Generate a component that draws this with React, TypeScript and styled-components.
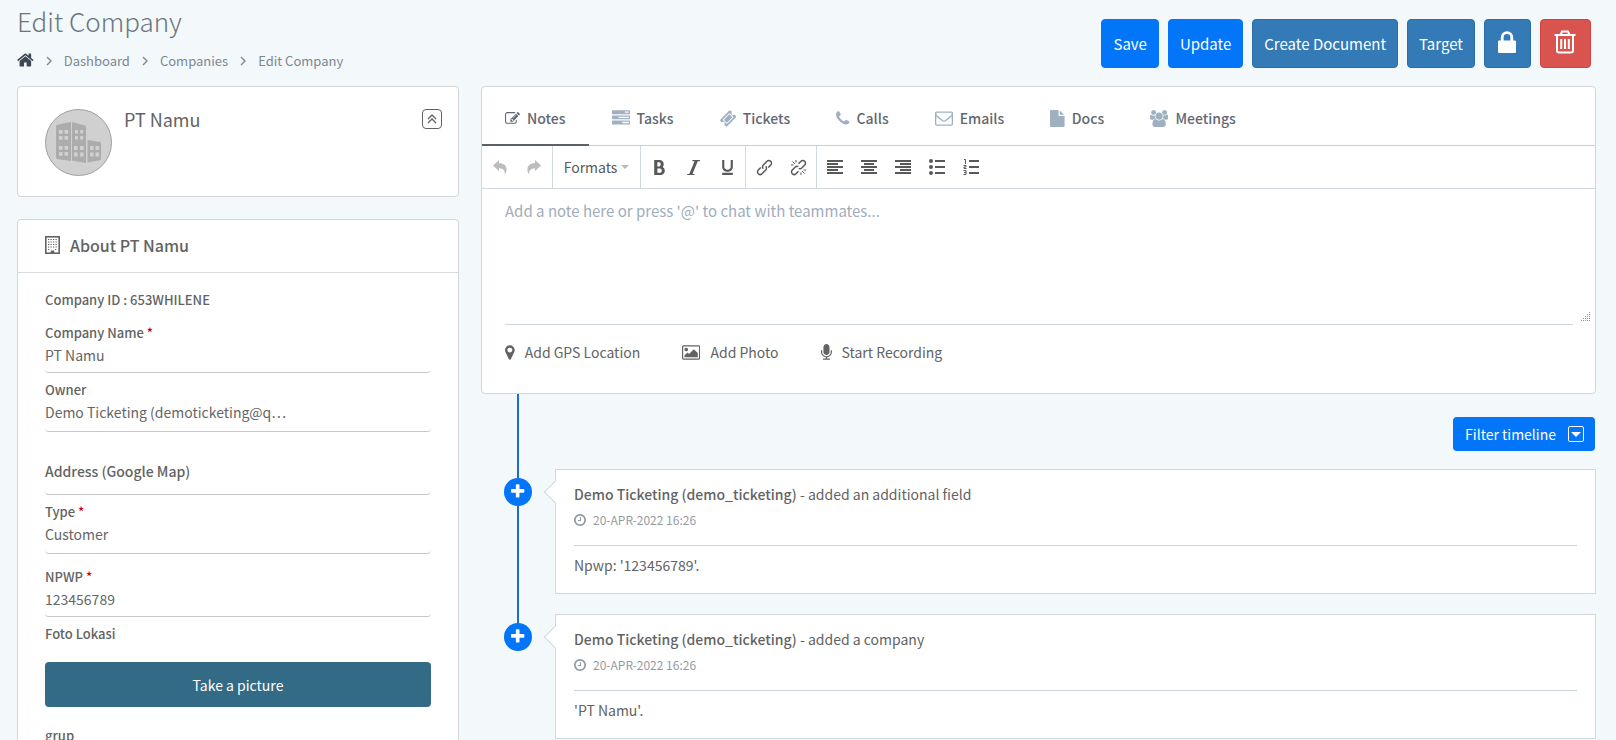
import React from "react";
import styled, { createGlobalStyle } from "styled-components";
import { ImBold, ImItalic, ImUnderline } from "react-icons/im";

const GlobalStyle = createGlobalStyle`
  *, *::before, *::after { box-sizing: border-box; }
  html { scrollbar-width: none; }
  body {
    margin: 0;
    background: #f3f8fb;
    color: #636363;
    font-family: "Noto Sans CJK JP", "Noto Sans", sans-serif;
    font-size: 14px;
    line-height: 20px;
  }
  button, input, select, textarea { font: inherit; color: inherit; }
  a { color: inherit; text-decoration: none; }
`;

/* ---------- icons ---------- */

const paths = {
  home: "M1472 992v480q0 26-19 45t-45 19h-384v-384h-256v384h-384q-26 0-45-19t-19-45v-480q0-1 .5-3t.5-3l575-474 575 474q1 2 1 6zm223-69l-62 74q-8 9-21 11h-3q-13 0-21-7l-692-577-692 577q-12 8-24 7-13-2-21-11l-62-74q-8-10-7-23.5t11-21.5l719-599q32-26 76-26t76 26l244 204v-195q0-14 9-23t23-9h192q14 0 23 9t9 23v408l219 182q10 8 11 21.5t-7 23.5z",
  edit: "M888 1184l116-116-152-152-116 116v56h96v96h56zm440-720q-16-16-33 1l-350 350q-17 17-1 33t33-1l350-350q17-17 1-33zm80 594v190q0 119-84.5 203.5t-203.5 84.5h-832q-119 0-203.5-84.5t-84.5-203.5v-832q0-119 84.5-203.5t203.5-84.5h832q63 0 117 25 15 7 18 23 3 17-9 29l-49 49q-14 14-32 8-23-6-45-6h-832q-66 0-113 47t-47 113v832q0 66 47 113t113 47h832q66 0 113-47t47-113v-126q0-13 9-22l64-64q15-15 35-7t20 29zm-96-738l288 288-672 672h-288v-288zm444 132l-92 92-288-288 92-92q28-28 68-28t68 28l152 152q28 28 28 68t-28 68z",
  tasks: "M1024 1408h640v-128h-640v128zm-384-512h1024v-128h-1024v128zm640-512h384v-128h-384v128zm512 832v256q0 26-19 45t-45 19h-1664q-26 0-45-19t-19-45v-256q0-26 19-45t45-19h1664q26 0 45 19t19 45zm0-512v256q0 26-19 45t-45 19h-1664q-26 0-45-19t-19-45v-256q0-26 19-45t45-19h1664q26 0 45 19t19 45zm0-512v256q0 26-19 45t-45 19h-1664q-26 0-45-19t-19-45v-256q0-26 19-45t45-19h1664q26 0 45 19t19 45z",
  ticket: "M1024 452l316 316-572 572-316-316zm-211 979l618-618q19-19 19-45t-19-45l-362-362q-18-18-45-18t-45 18l-618 618q-19 19-19 45t19 45l362 362q18 18 45 18t45-18zm889-637l-907 908q-37 37-90.5 37t-90.5-37l-126-126q56-56 56-136t-56-136-136-56-136 56l-125-126q-37-37-37-90.5t37-90.5l907-906q37-37 90.5-37t90.5 37l125 125q-56 56-56 136t56 136 136 56 136-56l126 125q37 37 37 90.5t-37 90.5z",
  phone: "M1600 1240q0 27-10 70.5t-21 68.5q-21 50-122 106-94 51-186 51-27 0-53-3.5t-57.5-12.5-47-14.5-55.5-20.5-49-18q-98-35-175-83-127-79-264-216t-216-264q-48-77-83-175-3-9-18-49t-20.5-55.5-14.5-47-12.5-57.5-3.5-53q0-92 51-186 56-101 106-122 25-11 68.5-21t70.5-10q14 0 21 3 18 6 53 76 11 19 30 54t35 63.5 31 53.5q3 4 17.5 25t21.5 35.5 7 28.5q0 20-28.5 50t-62 55-62 53-28.5 46q0 9 5 22.5t8.5 20.5 14 24 11.5 19q76 137 174 235t235 174q2 1 19 11.5t24 14 20.5 8.5 22.5 5q18 0 46-28.5t53-62 55-62 50-28.5q14 0 28.5 7t35.5 21.5 25 17.5q25 15 53.5 31t63.5 35 54 30q70 35 76 53 3 7 3 21z",
  mail: "M1664 1504v-768q-32 36-69 66-268 206-426 338-51 43-83 67t-86.5 48.5-102.5 24.5h-2q-48 0-102.5-24.5t-86.5-48.5-83-67q-158-132-426-338-37-30-69-66v768q0 13 9.5 22.5t22.5 9.5h1472q13 0 22.5-9.5t9.5-22.5zm0-1051v-24.5l-.5-13-3-12.5-5.5-9-9-7.5-14-2.5h-1472q-13 0-22.5 9.5t-9.5 22.5q0 168 147 284 193 152 401 317 6 5 35 29.5t46 37.5 44.5 31.5 50.5 27.5 43 9h2q20 0 43-9t50.5-27.5 44.5-31.5 46-37.5 35-29.5q208-165 401-317 54-43 100.5-115.5t46.5-131.5zm128-37v1088q0 66-47 113t-113 47h-1472q-66 0-113-47t-47-113v-1088q0-66 47-113t113-47h1472q66 0 113 47t47 113z",
  file: "M1152 512v-472q22 14 36 28l408 408q14 14 28 36h-472zm-128 32q0 40 28 68t68 28h544v1056q0 40-28 68t-68 28h-1344q-40 0-68-28t-28-68v-1600q0-40 28-68t68-28h800v544z",
  users: "M529 896q-162 5-265 128h-134q-82 0-138-40.5t-56-118.5q0-353 124-353 6 0 43.5 21t97.5 42.5 119 21.5q67 0 133-23-5 37-5 66 0 159 93 290zm1071 637q0 120-73 189.5t-194 69.5h-874q-121 0-194-69.5t-73-189.5q0-53 3.5-103.5t14-109 26.5-108.5 43-97.5 62-81 85.500-53.500 111.500-20q10 0 43 21.500t73 48 107 48 135 21.500 135-21.500 107-48 73-48 43-21.500q61 0 111.500 20t85.500 53.500 62 81 43 97.500 26.500 108.500 14 109 3.500 103.500zm-1024-1277q0 106-75 181t-181 75-181-75-75-181 75-181 181-75 181 75 75 181zm704 384q0 159-112.500 271.500t-271.500 112.500-271.500-112.500-112.500-271.500 112.500-271.500 271.500-112.500 271.500 112.500 112.500 271.500zm576 225q0 78-56 118.500t-138 40.500h-134q-103-123-265-128 93-131 93-290 0-29-5-66 66 23 133 23 59 0 119-21.500t97.500-42.500 43.500-21q124 0 124 353zm-128-609q0 106-75 181t-181 75-181-75-75-181 75-181 181-75 181 75 75 181z",
  marker: "M1152 640q0-106-75-181t-181-75-181 75-75 181 75 181 181 75 181-75 75-181zm256 0q0 109-33 179l-364 774q-16 33-47.5 52t-67.5 19-67.5-19-46.5-52l-365-774q-33-70-33-179 0-212 150-362t362-150 362 150 150 362z",
  photo: "M576 576q0 80-56 136t-136 56-136-56-56-136 56-136 136-56 136 56 56 136zm1024 384v448h-1408v-192l320-320 160 160 512-512zm96-704h-1600q-13 0-22.5 9.5t-9.5 22.5v1216q0 13 9.5 22.5t22.5 9.5h1600q13 0 22.5-9.5t9.5-22.5v-1216q0-13-9.5-22.5t-22.5-9.5zm160 32v1216q0 66-47 113t-113 47h-1600q-66 0-113-47t-47-113v-1216q0-66 47-113t113-47h1600q66 0 113 47t47 113z",
  mic: "M1472 704v128q0 221-147.5 384.5t-364.5 187.5v132h256q26 0 45 19t19 45-19 45-45 19h-640q-26 0-45-19t-19-45 19-45 45-19h256v-132q-217-24-364.5-187.5t-147.5-384.5v-128q0-26 19-45t45-19 45 19 19 45v128q0 185 131.5 316.5t316.5 131.5 316.5-131.5 131.5-316.5v-128q0-26 19-45t45-19 45 19 19 45zm-256-384v512q0 132-94 226t-226 94-226-94-94-226v-512q0-132 94-226t226-94 226 94 94 226z",
  clock: "M1024 544v448q0 14-9 23t-23 9h-320q-14 0-23-9t-9-23v-64q0-14 9-23t23-9h224v-352q0-14 9-23t23-9h64q14 0 23 9t9 23zm416 352q0-148-73-273t-198-198-273-73-273 73-198 198-73 273 73 273 198 198 273 73 273-73 198-198 73-273zm224 0q0 209-103 385.5t-279.5 279.5-385.5 103-385.5-103-279.5-279.5-103-385.5 103-385.5 279.5-279.5 385.5-103 385.5 103 279.5 279.5 103 385.5z",
  plus: "M1600 736v192q0 40-28 68t-68 28h-416v416q0 40-28 68t-68 28h-192q-40 0-68-28t-28-68v-416h-416q-40 0-68-28t-28-68v-192q0-40 28-68t68-28h416v-416q0-40 28-68t68-28h192q40 0 68 28t28 68v416h416q40 0 68 28t28 68z",
};

type IconName = keyof typeof paths;

const boxes: Record<IconName, string> = {
  home: "64 0 1664 1792",
  edit: "0 0 1792 1792",
  tasks: "0 0 1792 1792",
  ticket: "40 0 1712 1792",
  phone: "192 0 1408 1792",
  mail: "0 0 1792 1792",
  file: "128 0 1536 1792",
  users: "-64 0 1920 1792",
  marker: "384 0 1024 1792",
  photo: "-64 0 1920 1792",
  mic: "320 0 1152 1792",
  clock: "128 0 1536 1792",
  plus: "192 0 1408 1792",
};

function Icon({ name, size }: { name: IconName; size: number }) {
  return (
    <svg height={size} viewBox={boxes[name]} fill="currentColor" aria-hidden="true">
      <path d={paths[name]} />
    </svg>
  );
}

const Chevron = () => (
  <svg width="6" height="10" viewBox="0 0 6 10" fill="none" stroke="currentColor" strokeWidth="1.4" aria-hidden="true">
    <path d="M1 1l4 4-4 4" />
  </svg>
);

const LockIcon = () => (
  <svg width="18" height="22" viewBox="0 0 18 22" aria-hidden="true">
    <path d="M4.200 11V6.500a4.800 4.800 0 0 1 9.600 0V11" fill="none" stroke="currentColor" strokeWidth="2.800" />
    <rect x="0" y="9.500" width="18" height="12.500" rx="1" fill="currentColor" />
  </svg>
);

const TrashIcon = () => (
  <svg width="22" height="24" viewBox="0 0 22 24" fill="none" stroke="currentColor" strokeWidth="2" aria-hidden="true">
    <path d="M0.500 5h21M6.500 5l1.500-3.500h6L15.500 5M3 5v15.500q0 2 2 2h12q2 0 2-2V5M7.200 9v10M11 9v10M14.800 9v10" />
  </svg>
);

const BuildingIcon = () => (
  <svg width="15" height="18" viewBox="0 0 15 18" fill="none" stroke="currentColor" aria-hidden="true">
    <rect x="0.800" y="0.800" width="13.400" height="16.400" strokeWidth="1.600" />
    <path d="M3 3.500h9M3 6h9M3 8.500h9M3 11h9M3 13.500h2M10 13.500h2" strokeWidth="1.200" strokeDasharray="1.300 1.200" />
    <path d="M7.500 14.500v2.500" strokeWidth="3.500" />
  </svg>
);

const AvatarPicture = () => (
  <svg viewBox="0 0 67 67" width="67" height="67" aria-hidden="true">
    <circle cx="33.500" cy="33.500" r="33" fill="#d0d0d0" stroke="#9aa0a6" />
    <g fill="#acacac">
      <path d="M11 17q0-1 1-1.300L26 13v39L12 50q-1-.2-1-1.200z" />
      <path d="M27 13l13 3.500q1 .3 1 1.300V54L27 51.500z" />
      <path d="M42.500 31l12.500 2q1 .2 1 1.200V50q0 1-1 1.200L42.500 53.500z" />
    </g>
    <g fill="#d0d0d0">
      {[21, 27, 37, 43].map((y) =>
        [14, 19.5].map((x) => <rect key={`${x}-${y}`} x={x} y={y} width="3.600" height="3.800" rx="0.500" />)
      )}
      {[21, 27].map((y) =>
        [30, 35.2].map((x) => <rect key={`${x}-${y}`} x={x} y={y} width="3" height="3.400" rx="0.500" />)
      )}
      {[37, 43.5].map((y) =>
        [29, 35, 45, 50.5].map((x) => <rect key={`${x}-${y}`} x={x} y={y} width="3.600" height="4" rx="0.500" />)
      )}
    </g>
  </svg>
);

const CollapseIcon = () => (
  <svg width="10" height="10" viewBox="0 0 10 10" fill="none" stroke="currentColor" strokeWidth="1.300" aria-hidden="true">
    <path d="M1 5l4-4 4 4M1 9l4-4 4 4" />
  </svg>
);

const UndoIcon = ({ flip = false }: { flip?: boolean }) => (
  <svg width="14" height="15" viewBox="0 0 14 15" fill="currentColor" aria-hidden="true">
    <path
      transform={flip ? "matrix(-1 0 0 1 14 0)" : undefined}
      d="M0 5.500L6 0v3.300c5 0 7.600 2.700 7.600 6.200 0 2-.7 3.600-2 5.200.7-3.400-.6-6.500-5.600-6.500V11z"
    />
  </svg>
);

const LinkIcon = () => (
  <svg width="17" height="17" viewBox="0 0 17 17" fill="none" stroke="currentColor" strokeWidth="1.500" aria-hidden="true">
    <path d="M7.300 9.700a2.600 2.600 0 0 1 0-3.700L11 2.300a2.600 2.600 0 0 1 3.700 3.700l-2.500 2.500" />
    <path d="M9.700 7.300a2.600 2.600 0 0 1 0 3.700L6 14.700A2.600 2.600 0 0 1 2.300 11l2.500-2.500" />
  </svg>
);

const UnlinkIcon = () => (
  <svg width="17" height="17" viewBox="0 0 17 17" fill="none" stroke="currentColor" strokeWidth="1.500" aria-hidden="true">
    <path d="M8.500 4.800L11 2.300a2.600 2.600 0 0 1 3.700 3.700l-3 3a2.600 2.600 0 0 1-3 .4" />
    <path d="M8.500 12.200L6 14.700A2.600 2.600 0 0 1 2.300 11l3-3a2.600 2.600 0 0 1 3-.4" />
    <path d="M2.500 2.500l2.500 2.500M6 1v2.500M1 6h2.500M14.500 14.500L12 12M11 16v-2.500M16 11h-2.500" strokeWidth="1" />
  </svg>
);

const AlignIcon = ({ rows }: { rows: [number, number][] }) => (
  <svg width="16" height="15" viewBox="0 0 16 15" fill="currentColor" aria-hidden="true">
    {rows.map(([x, w], i) => (
      <rect key={i} x={x} y={i * 3} width={w} height="2" />
    ))}
  </svg>
);

const BulletIcon = () => (
  <svg width="16" height="16" viewBox="0 0 16 16" fill="currentColor" aria-hidden="true">
    {[2, 8, 14].map((y) => (
      <g key={y}>
        <circle cx="2" cy={y} r="2" />
        <rect x="6" y={y - 1} width="10" height="2" />
      </g>
    ))}
  </svg>
);

const NumberIcon = () => (
  <svg width="16" height="16" viewBox="0 0 16 16" fill="none" stroke="currentColor" aria-hidden="true">
    <path d="M6 2h10M6 8h10M6 14h10" strokeWidth="2" />
    <path d="M1 .5h1.500V5M.5 6.500h2.500v1.500h-2v1.500h2.500M.5 11.500h2.500v4H.5M1 13.500h2" />
  </svg>
);

const CaretDown = ({ w }: { w: number }) => (
  <svg width={w} height={w / 2} viewBox="0 0 8 4" fill="currentColor" aria-hidden="true">
    <path d="M0 0h8L4 4z" />
  </svg>
);

const GripIcon = () => (
  <svg width="10" height="10" viewBox="0 0 10 10" stroke="#9a9488" strokeWidth="1" strokeDasharray="1 1" aria-hidden="true">
    <path d="M8 .5h2M6 2.500h4M4 4.500h6M2 6.500h8M0 8.500h10" />
  </svg>
);

/* ---------- page frame ---------- */

const Page = styled.div`
  padding: 0 20px 24px 17px;
`;

const Header = styled.header`
  display: flex;
  justify-content: space-between;
  align-items: flex-start;
  height: 86px;
`;

const Title = styled.h1`
  margin: 0;
  font-size: 26px;
  line-height: 42px;
  font-weight: 300;
  color: #6c757d;
`;

const Breadcrumb = styled.nav`
  display: flex;
  align-items: center;
  gap: 12px;
  margin-top: 9px;
  font-size: 13px;
  color: #7d8790;
`;

const HomeLink = styled.a`
  display: flex;
  padding-bottom: 2px;
  color: #3e4756;
`;

const Actions = styled.div`
  display: flex;
  gap: 9px;
  padding: 19px 5px 0 0;
`;

const tones = {
  bright: { fill: "#0275f8", edge: "#0275f8" },
  steel: { fill: "#337ab7", edge: "#2e6da4" },
  danger: { fill: "#d9534f", edge: "#d0433f" },
};

const ActionButton = styled.button<{ $tone: keyof typeof tones }>`
  display: flex;
  align-items: center;
  height: 49px;
  padding: 0 11px;
  border: 1px solid ${(p) => tones[p.$tone].edge};
  border-radius: 4px;
  background: ${(p) => tones[p.$tone].fill};
  color: #fff;
  font-size: 15px;
  font-weight: 400;
`;

const IconAction = styled(ActionButton)`
  padding: 0 14px 4px 13px;
`;

const Columns = styled.main`
  display: grid;
  grid-template-columns: 442fr 1115fr;
  gap: 22px;
`;

const Column = styled.div`
  display: flex;
  flex-direction: column;
  min-width: 0;
`;

const Card = styled.section`
  background: #fff;
  border: 1px solid #d3d5d7;
  border-radius: 4px;
`;

/* ---------- left column ---------- */

const ProfileCard = styled(Card)`
  display: flex;
  align-items: flex-start;
  gap: 12px;
  padding: 22px 16px 20px 27px;
  margin-bottom: 22px;
`;

const Avatar = styled.div`
  display: flex;
`;

const ProfileName = styled.h2`
  flex: 1;
  margin: 0;
  font-size: 18px;
  line-height: 20px;
  font-weight: 400;
`;

const CollapseButton = styled.button`
  display: flex;
  align-items: center;
  justify-content: center;
  width: 20px;
  height: 20px;
  padding: 0;
  border: 1px solid #5f6368;
  border-radius: 4px;
  background: #fff;
`;

const AboutHeader = styled.h2`
  display: flex;
  align-items: center;
  gap: 10px;
  height: 53px;
  margin: 0;
  padding: 0 27px 2px;
  border-bottom: 1px solid #d9dcdf;
  font-size: 16px;
  font-weight: 500;
`;

const AboutForm = styled.form`
  display: flex;
  flex-direction: column;
  padding: 17px 27px 24px;
`;

const CompanyId = styled.p`
  margin: 0 0 13px;
  font-size: 13px;
  font-weight: 500;
`;

const Field = styled.div<{ $gap: number }>`
  display: flex;
  flex-direction: column;
  margin-bottom: ${(p) => p.$gap}px;
`;

const Label = styled.label<{ $large?: boolean }>`
  font-size: ${(p) => (p.$large ? 14 : 13)}px;
  font-weight: 500;
`;

const Required = styled.span`
  color: #d40000;
`;

const control = `
  width: 100%;
  margin: 0;
  padding: 0;
  border: 0 solid transparent;
  border-bottom: 1px solid #c8c8c8;
  border-radius: 4px;
  background: transparent;
  font-size: 14px;
  font-weight: 400;
  color: #666;
  appearance: none;
  outline: none;
`;

const TextInput = styled.input<{ $short?: boolean }>`
  ${control}
  height: ${(p) => (p.$short ? 14 : 30)}px;
  padding-bottom: ${(p) => (p.$short ? 0 : 6)}px;
`;

const Select = styled.select`
  ${control}
  height: 32px;
  padding-bottom: 8px;
`;

const PictureButton = styled.button`
  height: 45px;
  margin: 18px 0 19px;
  border: 0;
  border-radius: 4px;
  background: #336b87;
  color: #fff;
`;

/* ---------- notes editor ---------- */

const Tabs = styled.div`
  display: flex;
  height: 59px;
  border-bottom: 1px solid #c9ced2;
`;

const Tab = styled.button<{ $active?: boolean }>`
  display: flex;
  align-items: center;
  gap: 7px;
  height: 59px;
  padding: 5px 23px 0;
  border: 0;
  border-bottom: 2px solid ${(p) => (p.$active ? "#5a6268" : "transparent")};
  background: transparent;
  color: #5f6872;
  font-weight: 500;

  svg { color: ${(p) => (p.$active ? "#5f6872" : "#9fb0c1")}; }
`;

const Toolbar = styled.div`
  display: flex;
  height: 43px;
  border-bottom: 1px solid #d3dade;
`;

const ToolGroup = styled.div`
  display: flex;
  padding: 0 1px;
  border-right: 1px solid #d3dade;

  &:last-child { border-right: 0; }
`;

const ToolButton = styled.button`
  display: flex;
  align-items: center;
  justify-content: center;
  width: 34px;
  padding: 0;
  border: 0;
  background: transparent;
  color: #595959;

  &:disabled { color: #bcbcbc; }
`;

const FormatsButton = styled(ToolButton)`
  gap: 4px;
  width: 85px;

  svg { color: #b3bcc2; }
`;

const EditorRow = styled.div`
  display: flex;
  align-items: flex-end;
  gap: 8px;
  padding: 0 4px 0 23px;
`;

const NoteArea = styled.textarea`
  flex: 1;
  height: 136px;
  padding: 12px 0 0;
  border: 0;
  border-bottom: 1px solid #cdd6dc;
  background: transparent;
  font-size: 15px;
  resize: none;
  outline: none;

  &::placeholder { color: #9fadbb; opacity: 1; }
`;

const Grip = styled.span`
  display: flex;
  padding-bottom: 3px;
`;

const Attachments = styled.div`
  display: flex;
  gap: 42px;
  height: 68px;
  padding: 17px 23px 0;
`;

const AttachButton = styled.button`
  display: flex;
  align-items: center;
  gap: 10px;
  height: 20px;
  padding: 0;
  border: 0;
  background: transparent;
`;

/* ---------- timeline ---------- */

const FilterRow = styled.div`
  display: flex;
  justify-content: flex-end;
  position: relative;
  padding: 23px 1px 18px 0;

  &::before {
    content: "";
    position: absolute;
    top: 0;
    bottom: 0;
    left: 36px;
    width: 2px;
    background: #1f6fc0;
  }
`;

const FilterButton = styled.button`
  display: flex;
  align-items: center;
  gap: 12px;
  height: 34px;
  padding: 0 11px 0 12px;
  border: 0;
  border-radius: 4px;
  background: #0275f8;
  color: #fff;
`;

const CaretBox = styled.span`
  display: flex;
  align-items: center;
  justify-content: center;
  width: 16px;
  height: 16px;
  border: 1px solid #fff;
  border-radius: 2px;
`;

const Timeline = styled.ol`
  margin: 0;
  padding: 0;
  list-style: none;
`;

const TimelineItem = styled.li`
  display: flex;
  gap: 23px;
  position: relative;
  padding: 0 0 20px 23px;

  &::before {
    content: "";
    position: absolute;
    top: 0;
    bottom: 0;
    left: 36px;
    width: 2px;
    background: #1f6fc0;
  }
  &:last-child::before {
    bottom: auto;
    height: 12px;
  }
`;

const Marker = styled.span`
  display: flex;
  align-items: center;
  justify-content: center;
  position: relative;
  width: 28px;
  height: 28px;
  margin-top: 9px;
  padding-bottom: 1px;
  border-radius: 50%;
  background: #0275f8;
  color: #fff;
`;

const EventCard = styled.article`
  flex: 1;
  position: relative;
  height: 125px;
  padding: 13px 18px 0;
  border: 1px solid #d0d8dd;
  background: #fff;

  &::before {
    content: "";
    position: absolute;
    top: 14px;
    left: -9px;
    width: 16px;
    height: 16px;
    border-left: 1px solid #d0d8dd;
    border-bottom: 1px solid #d0d8dd;
    background: #fff;
    transform: rotate(45deg);
  }
`;

const EventTitle = styled.p`
  margin: 0;
  line-height: 22px;

  strong { font-weight: 500; }
`;

const EventTime = styled.p`
  display: flex;
  align-items: center;
  gap: 7px;
  margin: 5px 0 0;
  padding-bottom: 15px;
  border-bottom: 1px solid #ccd5da;
  font-size: 12px;
  color: #959ba3;
`;

const EventBody = styled.p`
  margin: 9px 0 0;
`;

const tabs: { label: string; icon: IconName; size: number }[] = [
  { label: "Notes", icon: "edit", size: 15 },
  { label: "Tasks", icon: "tasks", size: 18 },
  { label: "Tickets", icon: "ticket", size: 17 },
  { label: "Calls", icon: "phone", size: 17 },
  { label: "Emails", icon: "mail", size: 18 },
  { label: "Docs", icon: "file", size: 17 },
  { label: "Meetings", icon: "users", size: 17 },
];

const events = [
  { action: "added an additional field", body: "Npwp: '123456789'." },
  { action: "added a company", body: "'PT Namu'." },
];

const left: [number, number][] = [[0, 16], [0, 11], [0, 16], [0, 11], [0, 16]];
const center: [number, number][] = [[0, 16], [3, 10], [0, 16], [3, 10], [0, 16]];
const right: [number, number][] = [[0, 16], [5, 11], [0, 16], [5, 11], [0, 16]];

export default function App() {
  return (
    <>
      <GlobalStyle />
      <Page>
        <Header>
          <div>
            <Title>Edit Company</Title>
            <Breadcrumb aria-label="Breadcrumb">
              <HomeLink href="#" aria-label="Home"><Icon name="home" size={18} /></HomeLink>
              <Chevron />
              <a href="#">Dashboard</a>
              <Chevron />
              <a href="#">Companies</a>
              <Chevron />
              <span>Edit Company</span>
            </Breadcrumb>
          </div>
          <Actions>
            <ActionButton type="button" $tone="bright">Save</ActionButton>
            <ActionButton type="button" $tone="bright">Update</ActionButton>
            <ActionButton type="button" $tone="steel">Create Document</ActionButton>
            <ActionButton type="button" $tone="steel">Target</ActionButton>
            <IconAction type="button" $tone="steel" aria-label="Lock"><LockIcon /></IconAction>
            <IconAction type="button" $tone="danger" aria-label="Delete"><TrashIcon /></IconAction>
          </Actions>
        </Header>

        <Columns>
          <Column>
            <ProfileCard>
              <Avatar><AvatarPicture /></Avatar>
              <ProfileName>PT Namu</ProfileName>
              <CollapseButton type="button" aria-label="Collapse"><CollapseIcon /></CollapseButton>
            </ProfileCard>

            <Card>
              <AboutHeader><BuildingIcon />About PT Namu</AboutHeader>
              <AboutForm>
                <CompanyId>Company ID : 653WHILENE</CompanyId>
                <Field $gap={7}>
                  <Label htmlFor="name">Company Name <Required>*</Required></Label>
                  <TextInput id="name" defaultValue="PT Namu" />
                </Field>
                <Field $gap={29}>
                  <Label htmlFor="owner">Owner</Label>
                  <Select id="owner"><option>Demo Ticketing (demoticketing@q…</option></Select>
                </Field>
                <Field $gap={7}>
                  <Label htmlFor="address" $large>Address (Google Map)</Label>
                  <TextInput id="address" $short />
                </Field>
                <Field $gap={13}>
                  <Label htmlFor="type">Type <Required>*</Required></Label>
                  <Select id="type"><option>Customer</option></Select>
                </Field>
                <Field $gap={7}>
                  <Label htmlFor="npwp">NPWP <Required>*</Required></Label>
                  <TextInput id="npwp" defaultValue="123456789" />
                </Field>
                <Label htmlFor="picture">Foto Lokasi</Label>
                <PictureButton id="picture" type="button">Take a picture</PictureButton>
                <Field $gap={7}>
                  <Label htmlFor="group">grup</Label>
                  <TextInput id="group" />
                </Field>
              </AboutForm>
            </Card>
          </Column>

          <Column>
            <Card>
              <Tabs role="tablist">
                {tabs.map((t, i) => (
                  <Tab key={t.label} type="button" role="tab" aria-selected={i === 0} $active={i === 0}>
                    <Icon name={t.icon} size={t.size} />
                    {t.label}
                  </Tab>
                ))}
              </Tabs>
              <Toolbar role="toolbar">
                <ToolGroup>
                  <ToolButton type="button" disabled aria-label="Undo"><UndoIcon /></ToolButton>
                  <ToolButton type="button" disabled aria-label="Redo"><UndoIcon flip /></ToolButton>
                </ToolGroup>
                <ToolGroup>
                  <FormatsButton type="button">Formats<CaretDown w={8} /></FormatsButton>
                </ToolGroup>
                <ToolGroup>
                  <ToolButton type="button" aria-label="Bold"><ImBold size={17} /></ToolButton>
                  <ToolButton type="button" aria-label="Italic"><ImItalic size={17} /></ToolButton>
                  <ToolButton type="button" aria-label="Underline"><ImUnderline size={17} /></ToolButton>
                </ToolGroup>
                <ToolGroup>
                  <ToolButton type="button" aria-label="Insert link"><LinkIcon /></ToolButton>
                  <ToolButton type="button" aria-label="Remove link"><UnlinkIcon /></ToolButton>
                </ToolGroup>
                <ToolGroup>
                  <ToolButton type="button" aria-label="Align left"><AlignIcon rows={left} /></ToolButton>
                  <ToolButton type="button" aria-label="Align center"><AlignIcon rows={center} /></ToolButton>
                  <ToolButton type="button" aria-label="Align right"><AlignIcon rows={right} /></ToolButton>
                  <ToolButton type="button" aria-label="Bullet list"><BulletIcon /></ToolButton>
                  <ToolButton type="button" aria-label="Numbered list"><NumberIcon /></ToolButton>
                </ToolGroup>
              </Toolbar>
              <EditorRow>
                <NoteArea aria-label="Note" placeholder="Add a note here or press '@' to chat with teammates..." />
                <Grip><GripIcon /></Grip>
              </EditorRow>
              <Attachments>
                <AttachButton type="button"><Icon name="marker" size={17} />Add GPS Location</AttachButton>
                <AttachButton type="button"><Icon name="photo" size={17} />Add Photo</AttachButton>
                <AttachButton type="button"><Icon name="mic" size={17} />Start Recording</AttachButton>
              </Attachments>
            </Card>

            <FilterRow>
              <FilterButton type="button">
                Filter timeline
                <CaretBox><CaretDown w={10} /></CaretBox>
              </FilterButton>
            </FilterRow>

            <Timeline>
              {events.map((e) => (
                <TimelineItem key={e.action}>
                  <Marker><Icon name="plus" size={17} /></Marker>
                  <EventCard>
                    <EventTitle><strong>Demo Ticketing (demo_ticketing)</strong> - {e.action}</EventTitle>
                    <EventTime><Icon name="clock" size={14} />20-APR-2022 16:26</EventTime>
                    <EventBody>{e.body}</EventBody>
                  </EventCard>
                </TimelineItem>
              ))}
            </Timeline>
          </Column>
        </Columns>
      </Page>
    </>
  );
}
